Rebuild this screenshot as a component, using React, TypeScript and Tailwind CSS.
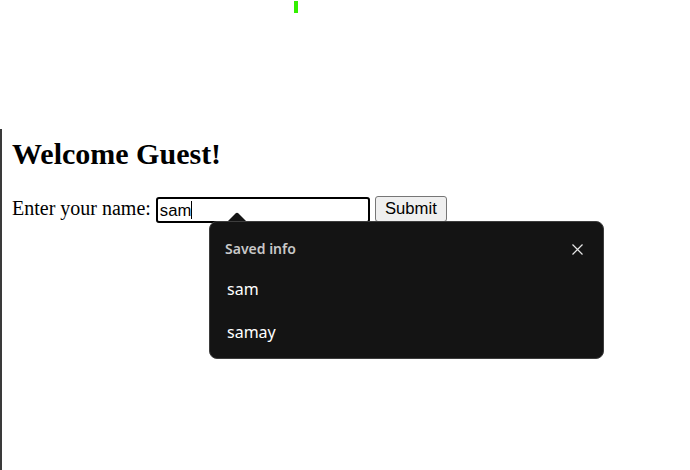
const saved = ["sam", "samay"];

export default function App() {
  return (
    <div className="relative w-[690px] h-[470px] overflow-hidden bg-white">
      {/* green marker at the top */}
      <div className="ml-[294px] mt-[1px] w-[4px] h-[12px] bg-[#33f000]" />

      {/* page frame */}
      <div className="mt-[116px] h-[341px] border-l-2 border-[#3a3a3a] pl-[10px] pt-[8px] font-['Liberation_Serif',serif] text-black">
        <h1 className="text-[30px] leading-[34px] font-bold mb-[25px]">Welcome Guest!</h1>

        <div className="flex items-start">
          <span className="text-[20px] leading-[23px] mt-[1px]">Enter your name:</span>
          <div className="ml-[5px] mt-[1px] w-[214px] h-[26px] border-2 border-black rounded-[3px] px-[2px] flex items-center font-['Liberation_Sans',sans-serif] text-[16.67px]">
            <span>sam</span>
            <span className="w-[1px] h-[18px] bg-black" />
          </div>
          <button className="ml-[5px] h-[26px] w-[72px] border border-[#767676] rounded-[3px] bg-[#efefef] font-['Liberation_Sans',sans-serif] text-[16.67px] leading-none">
            Submit
          </button>
        </div>
      </div>

      {/* autofill popup */}
      <svg className="absolute left-[226px] top-[212px]" width="22" height="11" viewBox="0 0 22 11">
        <path d="M0 11 L9.5 1.5 Q11 0 12.5 1.5 L22 11 Z" fill="#141414" />
      </svg>
      <div className="absolute left-[209px] top-[221px] w-[395px] h-[138px] rounded-[8px] border border-[#3d3d3d] bg-[#141414] font-['Noto_Sans',sans-serif]">
        <div className="flex items-center justify-between pl-[15px] pr-[20px] pt-[17px]">
          <span className="text-[14px] leading-[20px] font-semibold text-[#c8c8c8]">Saved info</span>
          <svg width="11" height="11" viewBox="0 0 11 11" className="text-[#e6e6e6]">
            <path d="M0.5 0.5 L10.5 10.5 M10.5 0.5 L0.5 10.5" stroke="currentColor" strokeWidth="1.2" />
          </svg>
        </div>
        <div className="flex flex-col gap-[21px] pl-[17px] pt-[19px]">
          {saved.map((name) => (
            <span key={name} className="text-[16px] leading-[22px] text-white">{name}</span>
          ))}
        </div>
      </div>
    </div>
  );
}
